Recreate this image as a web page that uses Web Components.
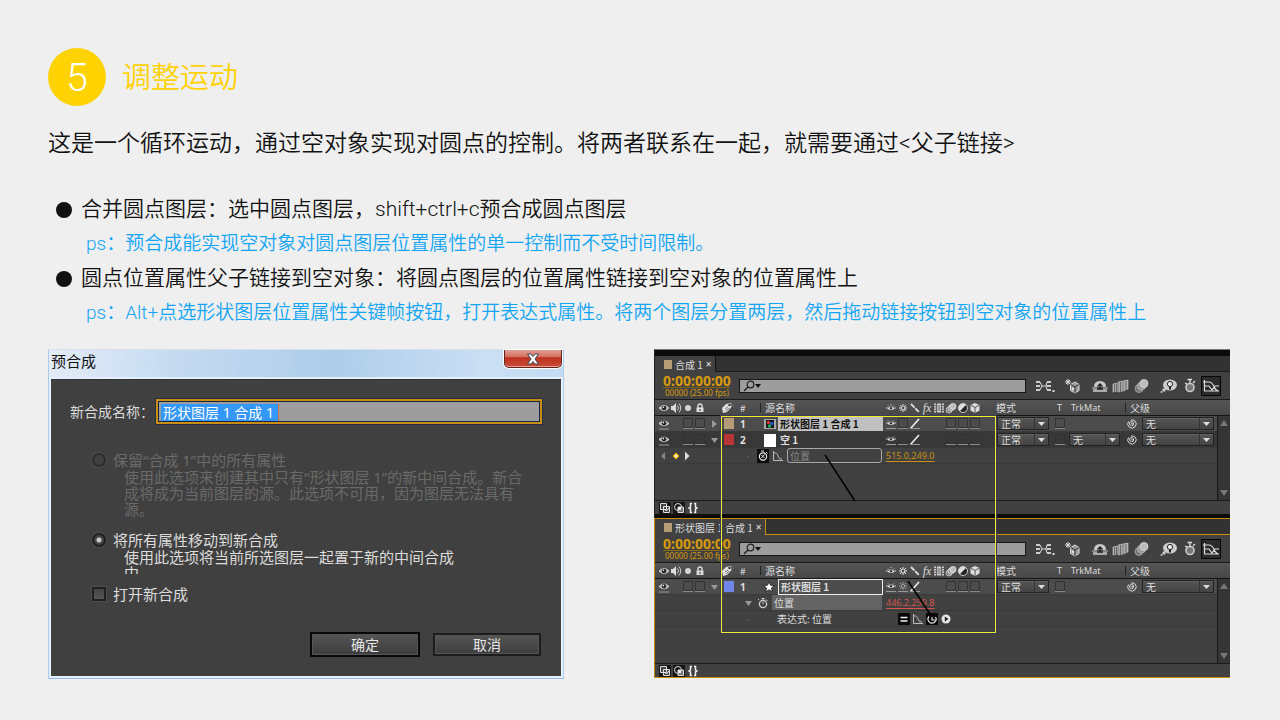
<!DOCTYPE html>
<html lang="zh-CN">
<head>
<meta charset="utf-8">
<title>调整运动</title>
<style>
body { margin: 0; background: #efefef; font-family: Roboto, "Noto Sans CJK SC", sans-serif; }
</style>
</head>
<body>
<tutorial-slide>
  <step-heading slot="heading" number="5">调整运动</step-heading>
  <span slot="lead">这是一个循环运动，通过空对象实现对圆点的控制。将两者联系在一起，就需要通过&lt;父子链接&gt;</span>
  <note-item slot="notes">合并圆点图层：选中圆点图层，shift+ctrl+c预合成圆点图层
    <span slot="ps">ps：预合成能实现空对象对圆点图层位置属性的单一控制而不受时间限制。</span>
  </note-item>
  <note-item slot="notes">圆点位置属性父子链接到空对象：将圆点图层的位置属性链接到空对象的位置属性上
    <span slot="ps">ps：Alt+点选形状图层位置属性关键帧按钮，打开表达式属性。将两个图层分置两层，然后拖动链接按钮到空对象的位置属性上</span>
  </note-item>
  <precomp-dialog slot="figures">预合成</precomp-dialog>
  <timeline-stack slot="figures">
    <timeline-panel comp="main">合成 1</timeline-panel>
    <timeline-panel comp="shape" active>形状图层 1 合成 1</timeline-panel>
  </timeline-stack>
</tutorial-slide>

<script>
/* name: [width, height, markup] */
const ICONS = {
  eye: [12, 12, '<path d="M1 6Q6 1 11 6Q6 11 1 6Z" fill="#bbb" stroke="#ddd" stroke-width=".8"/><circle cx="6" cy="6" r="2.3" fill="#222"/><circle cx="5.4" cy="5.2" r=".8" fill="#fff"/>'],
  eyeline: [12, 12, '<path d="M1 5.5Q6 .5 11 5.5Q6 10 1 5.5Z" fill="#bbb" stroke="#ddd" stroke-width=".8"/><circle cx="6" cy="5.2" r="2.2" fill="#222"/><circle cx="5.4" cy="4.6" r=".8" fill="#fff"/><path d="M1 11h10" stroke="#999"/>'],
  audio: [12, 12, '<path d="M1 4h2l3-3v10L3 8H1Z" fill="#ddd"/><path d="M7.500 3.500q2 2.500 0 5M9 1.500q3.500 4.500 0 9" fill="none" stroke="#ccc"/>'],
  solo: [12, 12, '<circle cx="6" cy="6" r="3" fill="#d4d4d4"/>'],
  lock: [12, 12, '<path d="M4 6V4a2 2 0 0 1 4 0v2" fill="none" stroke="#ddd" stroke-width="1.400"/><path d="M2.500 5.500h7V10h-7Z" fill="#ddd"/><path d="M6 7v2" stroke="#333"/>'],
  tag: [13, 12, '<path d="M1 6 5 2l5-1 .5 4L6 10l-4 1Z" fill="#ddd"/><circle cx="8.500" cy="3" r="1.200" fill="#333"/><path d="M9 3q3-3 3.500 1M4 7l3-2M5 9l3-3" stroke="#666" fill="none" stroke-width=".8"/>'],
  shy: [12, 12, '<path d="M1 6h2M9 6h2M3 3.500l1 1M9 3.500l-1 1M6 2v1" stroke="#ccc"/><path d="M3 6Q6 3 9 6V7Q6 9 3 7Z" fill="#eee"/><circle cx="6" cy="6.200" r="1.300" fill="#333"/>'],
  shyline: [12, 12, '<path d="M1 5h2M9 5h2M3 2.500l1 1M9 2.500l-1 1" stroke="#ccc"/><path d="M3 5Q6 2 9 5V6Q6 8 3 6Z" fill="#eee"/><circle cx="6" cy="5.200" r="1.300" fill="#333"/><path d="M1 10.500h10" stroke="#999"/>'],
  sun: [12, 12, '<circle cx="6" cy="6" r="2" fill="none" stroke="#ddd" stroke-width="1.200"/><path d="M6 2v1.500M6 8.500V10M2 6h1.500M8.500 6H10M3 3l1 1M8 8l1 1M9 3 8 4M4 8 3 9" stroke="#ddd"/>'],
  sunline: [12, 12, '<circle cx="6" cy="5" r="1.800" fill="none" stroke="#aaa"/><path d="M6 1v1.500M6 7.500V9M2 5h1.500M8.500 5H10M3 2l1 1M8 7l1 1M9 2 8 3M4 7 3 8" stroke="#aaa"/><path d="M1 10.500h10" stroke="#999"/>'],
  backslash: [12, 12, '<path d="M2 2l8 8" stroke="#ddd" stroke-width="1.800" stroke-dasharray="5 1"/>'],
  slash: [12, 12, '<path d="M1.500 10.500 10 1" stroke="#eee" stroke-width="1.600"/><path d="M1 10.500h10" stroke="#999"/>'],
  film: [12, 12, '<path d="M1 1.500h10v9H1Z" fill="#ccc"/><path d="M3.500 1v10M8.500 1v10M1 3.500h2M1 6h2M1 8.500h2M9 3.500h2M9 6h2M9 8.500h2" stroke="#444" stroke-width=".8"/><path d="M4.500 4h3M4.500 6h3M4.500 8h3" stroke="#666"/>'],
  blur: [12, 12, '<circle cx="4" cy="8" r="3" fill="#888" stroke="#ccc" stroke-width=".8"/><circle cx="6" cy="6" r="3" fill="#999" stroke="#ddd" stroke-width=".8"/><circle cx="8" cy="4.500" r="3" fill="#bbb" stroke="#eee" stroke-width=".8"/>'],
  adjust: [12, 12, '<circle cx="6" cy="6" r="4.500" fill="#222" stroke="#ccc"/><path d="M9.200 2.800A4.500 4.500 0 0 0 2.800 9.200Z" fill="#ddd"/>'],
  cube: [12, 12, '<path d="M6 1l4.500 2v5.500L6 11 1.500 8.500V3Z" fill="#ddd"/><path d="M1.500 3 6 5.500 10.500 3M6 5.500V11" stroke="#555" fill="none"/>'],
  box: [12, 12, '<path d="M1.500 .5h9v9h-9Z" fill="none" stroke="#333"/><path d="M1 10.500h10" stroke="#8a8a8a"/>'],
  none: [12, 12, ''],
  right: [8, 12, '<path d="M2 2v8l5-4Z" fill="#999"/>'],
  down: [8, 12, '<path d="M1 4h7L4.500 9Z" fill="#999"/>'],
  prevkey: [12, 12, '<path d="M7 2v8L3 6Z" fill="#888"/>'],
  key: [12, 12, '<path d="M6 2l4 4-4 4-4-4Z" fill="#e8a812" stroke="#222" stroke-width=".6"/><path d="M6 4l2 2-2 2-2-2Z" fill="#fff6c8"/>'],
  nextkey: [12, 12, '<path d="M3 1.500v9l4.500-4.500Z" fill="#ddd"/>'],
  dot: [8, 12, '<circle cx="4" cy="7" r=".7" fill="#777"/>'],
  comp: [14, 12, '<path d="M1 1h12v10H1Z" fill="#aaa"/><path d="M3 2h8v8H3Z" fill="#181818"/><circle cx="5.500" cy="4.500" r="1.700" fill="#d33"/><circle cx="8.800" cy="5.500" r="1.700" fill="#25c"/><circle cx="6.500" cy="8" r="1.700" fill="#2a5"/>'],
  white: [14, 14, '<path d="M1 1h12v13H1Z" fill="#fff"/>'],
  star: [12, 12, '<path d="M6 .8l1.500 3.500 3.800.3-2.900 2.500.9 3.700L6 8.800l-3.300 2 .9-3.700L.7 4.600l3.800-.3Z" fill="#fff" stroke="#111" stroke-width=".7"/>'],
  watch: [12, 12, '<circle cx="6" cy="7" r="3.600" fill="none" stroke="#ccc" stroke-width="1.300"/><path d="M6 7V4.500M4.500 1.500h3M6 1v2M9 2.500l1.500 1.500M2 3l-1-1" stroke="#ccc"/>'],
  watchon: [12, 14, '<path d="M0 0h12v14H0Z" fill="#0c0c0c"/><circle cx="6" cy="7.500" r="3.600" fill="none" stroke="#eee" stroke-width="1.200"/><path d="M4.500 6l3 3M4 2h3M9 3l1.500 1.500M7.500 5.500 4.500 9" stroke="#eee"/>'],
  graph: [12, 12, '<path d="M1.500 1v9.500H11M1.500 3Q5 2 6 6t4 3" fill="none" stroke="#bbb"/>'],
  equal: [12, 12, '<path d="M0 0h12v12H0Z" fill="#080808"/><path d="M2.500 4.500h7M2.500 8h7" stroke="#eee" stroke-width="1.600"/>'],
  whip: [12, 12, '<path d="M0 0h12v12H0Z" fill="#080808"/><path d="M3 3.500A4 4 0 1 0 9.500 4M6 3.500V7h3" fill="none" stroke="#eee" stroke-width="1.200"/>'],
  play: [12, 12, '<circle cx="6" cy="6" r="4.500" fill="#e4e4e4"/><path d="M4.800 3.500v5L8.500 6Z" fill="#222"/>'],
  spiral: [12, 12, '<path d="M5 7.500A2 2 0 1 1 7.500 6Q7.500 8 5.500 7.500M2.500 3.500A4.200 4.200 0 1 0 9 3Q7 1.500 5 2" fill="none" stroke="#ddd" stroke-width="1"/><circle cx="6" cy="5.800" r=".8" fill="#ddd"/>'],
  flow: [20, 14, '<path d="M1 3h4M1 7h4M1 11h4M12 3h4M12 7h4M12 11h4" stroke="#ccc" stroke-width="2"/><path d="M5 3l2 4-2 4M7 7h4M12 3l-1 4 1 4" fill="none" stroke="#ddd"/><path d="M17.500 11h2v2h-2Z" fill="#ddd"/>'],
  draft: [20, 16, '<path d="M5 1v6M2 4h6M3 2l4 4M7 2 3 6" stroke="#ddd"/><path d="M7.500 6.500l4.500-2.500 4 2.500v6l-4 2.500-4.500-2.500Z" fill="#999" stroke="#ddd"/><path d="M7.500 6.500l4.500 2.500 4-2.500M12 9v6" stroke="#333" fill="none"/><path d="M9 9.500l2 1v2l-2-1Z" fill="#eee"/>'],
  hide: [20, 14, '<path d="M4 8q0-6 6-6t6 6Z" fill="#c8c8c8"/><path d="M3 10h4v1h6v-1h4v3H3Z" fill="#aaa"/><path d="M2 9h5M13 9h5" stroke="#ccc"/><path d="M10 10V5M7.500 7.500 10 5l2.500 2.500" stroke="#222" fill="none" stroke-width="1.400"/>'],
  blend: [20, 14, '<path d="M2 5l5-1v8l-5 1ZM7 3l5-1v10l-5 1ZM12 2l5-1v9l-5 2Z" fill="#aaa" stroke="#ccc" stroke-width=".6"/><path d="M3.500 5v8M5.500 5v8M7 3v10M12 2v10M9.500 3v10M15 2v9" stroke="#555" stroke-width=".8"/>'],
  motion: [20, 16, '<circle cx="7" cy="10.500" r="4" fill="#777" stroke="#aaa" stroke-width=".8"/><circle cx="9.500" cy="8" r="4" fill="#999" stroke="#bbb" stroke-width=".8"/><circle cx="12" cy="5.500" r="4" fill="#bbb" stroke="#ddd" stroke-width=".8"/>'],
  brain: [20, 16, '<ellipse cx="11" cy="7" rx="7" ry="5.500" fill="#ccc"/><circle cx="5" cy="12" r="1.700" fill="#ccc"/><circle cx="2.500" cy="14" r="1" fill="#ccc"/><circle cx="11" cy="6" r="2.600" fill="#eee" stroke="#222"/><path d="M11 8.500v3" stroke="#222" stroke-width="2"/>'],
  timer: [20, 16, '<circle cx="10" cy="9.500" r="4" fill="#777" stroke="#ccc" stroke-width="1.600"/><path d="M10 5V2M7.500 1.500H12M13 5l2-2M5 5l2 1" stroke="#ddd" stroke-width="1.300"/>'],
  grapheditor: [20, 20, '<path d="M.5.500h19v19H.5Z" fill="#2b2b2b" stroke="#050505"/><path d="M3.500 4v11H18M2 6h6q3 0 5 4.500t5 4.500M4 10h4l3 4 3-4h4" fill="none" stroke="#ddd" stroke-width="1.200"/>'],
  layersfoot: [12, 12, '<path d="M0 0h12v12H0Z" fill="#151515"/><path d="M1.500 1.500h6v6h-6ZM4.500 4.500h6v6h-6Z" fill="#444" stroke="#ddd"/><path d="M5.500 7l2 2 2.500-3" stroke="#eee" fill="none"/>'],
  modefoot: [12, 12, '<path d="M0 0h12v12H0Z" fill="#151515"/><circle cx="5" cy="5" r="3.500" fill="none" stroke="#ddd"/><path d="M5 5h5.500v5.500H5Z" fill="#777" stroke="#ddd"/><path d="M5 5h3v3H5Z" fill="#eee"/>'],
  braces: [12, 12, '<path d="M5 1.500H3.500V5L2 6l1.500 1v3.500H5M7 1.500h1.500V5L10 6 8.500 7v3.500H7" fill="none" stroke="#eee" stroke-width="1.500"/>'],
  search: [20, 12, '<circle cx="7.500" cy="4.500" r="3.300" fill="none" stroke="#222" stroke-width="1.200"/><path d="M5 7l-4 4" stroke="#222" stroke-width="1.500"/><path d="M12 4h6l-3 4Z" fill="#111"/>'],
  cross: [14, 12, '<path d="M1.500 1h3.500l2 2.500L9 1h3.500L9 6l3.500 5H9L7 8.500 5 11H1.500L5 6Z" fill="#fff" stroke="#3b4455"/>'],
  scrollup: [8, 8, '<path d="M4 1l4 6H0Z" fill="#777"/>'],
  scrolldown: [8, 8, '<path d="M4 7l4-6H0Z" fill="#777"/>']
};

customElements.define('ae-icon', class extends HTMLElement {
  connectedCallback() {
    if (this.shadowRoot) return;
    const [w, h, art] = ICONS[this.getAttribute('name')];
    this.attachShadow({ mode: 'open' }).innerHTML =
      `<style>:host{display:inline-block;flex:none;line-height:0}svg{display:block}</style>
       <svg width="${w}" height="${h}" viewBox="0 0 ${w} ${h}" aria-hidden="true">${art}</svg>`;
  }
});

const icon = n => `<ae-icon name="${n}"></ae-icon>`;
const icons = s => s.split(' ').map(icon).join('');

function define(name, html) {
  customElements.define(name, class extends HTMLElement {
    connectedCallback() {
      if (this.shadowRoot) return;
      const root = this.attachShadow({ mode: 'open' });
      root.innerHTML = typeof html === 'function' ? html(this) : html;
    }
  });
}

define('tutorial-slide', `
<style>
:host { display: block; padding: 48px 50px 40px 48px; color: #111; font-weight: 350; }
p { margin: 21px 0 31px; font-size: 23px; line-height: 34px; }
.figures { display: grid; grid-template-columns: 516fr 576fr; column-gap: 90px; align-items: start; margin-top: 19px; }
</style>
<slot name="heading"></slot>
<p><slot name="lead"></slot></p>
<div role="list"><slot name="notes"></slot></div>
<div class="figures"><slot name="figures"></slot></div>`);

define('step-heading', el => `
<style>
:host { display: flex; align-items: center; gap: 16px; color: #ffd200; }
.n { width: 58px; height: 58px; border-radius: 50%; background: #ffd200; color: #fff; text-align: center; font: 300 39px/60px Roboto, sans-serif; }
h1 { margin: 0; font-size: 29px; line-height: 60px; height: 58px; font-weight: 350; }
</style>
<span class="n">${el.getAttribute('number')}</span><h1><slot></slot></h1>`);

define('note-item', `
<style>
:host { display: block; font-size: 21px; line-height: 35px; }
.main { display: flex; align-items: center; gap: 9px; padding-left: 8px; }
.main::before { content: ""; width: 16px; height: 16px; border-radius: 50%; background: #111; }
.ps { padding-left: 38px; font-size: 19px; line-height: 34px; color: #12a5f5; }
</style>
<div role="listitem"><div class="main"><span><slot></slot></span></div><div class="ps"><slot name="ps"></slot></div></div>`);

define('precomp-dialog', `
<style>
:host { display: block; box-sizing: border-box; padding: 0 2px 2px; border: 1px solid #a9cdee; border-top-color: #d9dfe8; border-bottom-color: #8dbdf0; background: #e6f2fc; font: 400 15px "Noto Sans", "Noto Sans CJK SC", sans-serif; color: #dcdcdc; }
header { display: flex; justify-content: space-between; margin: 0 -2px; padding-left: 2px; height: 27px; border-bottom: 2px solid #e3f0fc; background: linear-gradient(100deg, #e4ecf8, #c5daf0 25%, #aecdea 55%, #cbdff4 85%, #c2dbf3); color: #111; }
h2 { margin: 0; font-size: 15px; line-height: 23px; font-weight: 400; }
.close { width: 58px; height: 18px; margin-right: 1px; padding: 0; display: grid; place-items: center; border: 1px solid #65221d; border-top: 0; border-radius: 0 0 5px 5px; background: linear-gradient(#e0a095, #d4705f 40%, #bd3320 45%, #c84a36); box-shadow: inset 0 -1px #e9a295, 0 0 0 1px #fff; }
form { background: #404040; padding: 18px 19px 19px; border-top: 1px solid #333; margin: 0; }
.name { display: flex; align-items: center; height: 26px; gap: 2px; }
.name span { width: 84px; white-space: nowrap; font-size: 14px; }
.field { flex: 1; display: flex; box-sizing: border-box; height: 25px; padding: 3px 1px 1px 3px; border: 2px solid #c88e10; background: #9d9d9d; box-shadow: inset 0 0 0 1px #172347, 0 0 0 1px #2a3044; }
input[type=text] { width: 100%; min-width: 0; height: 17px; box-sizing: border-box; border: 0; outline: 0; padding: 0 0 0 2px; background: linear-gradient(90deg, #3397fc 117px, #d0733c 117px 118px, transparent 118px); color: #fff; font: 400 14px/17px "Noto Sans", "Noto Sans CJK SC", sans-serif; }
.opt { display: grid; grid-template-columns: 15px 1fr; column-gap: 6px; align-items: center; padding-left: 22px; line-height: 18px; }
.opt small { grid-column: 2; margin-left: 11px; font-size: 15px; line-height: 16px; white-space: nowrap; }
.opt input { appearance: none; margin: 0; width: 14px; height: 14px; box-sizing: border-box; border: 2px solid #202020; border-radius: 50%; background: #484848; box-shadow: 0 0 0 1px #4d4d4d; }
.opt input:checked { background: radial-gradient(#ccc 2px, #444 3px); }
.opt input:disabled { border-color: #2c2c2c; background: #404040; }
.opt input[type=checkbox] { border-radius: 0; background: linear-gradient(#444, #565656); }
.first { margin-top: 27px; color: #6a6a6a; }
.second { margin-top: 14px; }
.second small { height: 25px; overflow: hidden; }
.third { margin-top: 11px; }
.buttons { display: flex; justify-content: flex-end; align-items: center; gap: 13px; margin: 29px 1px 0 0; }
.buttons button { width: 108px; height: 23px; padding: 0; border: 2px solid #1c1c1c; background: linear-gradient(#555, #3c3c3c); color: #e6e6e6; font: 400 14px/18px "Noto Sans", "Noto Sans CJK SC", sans-serif; box-shadow: inset 0 0 0 1px #555; }
.buttons .ok { width: 110px; height: 25px; border-color: #080808; }
</style>
<header><h2><slot></slot></h2><button class="close" aria-label="关闭">${icon('cross')}</button></header>
<form>
  <label class="name"><span>新合成名称：</span><div class="field"><input type="text" value="形状图层 1 合成 1"></div></label>
  <div class="opt first"><input type="radio" id="keep" name="mode" disabled><label for="keep">保留“合成 1”中的所有属性</label>
    <small>使用此选项来创建其中只有“形状图层 1”的新中间合成。新合<br>成将成为当前图层的源。此选项不可用，因为图层无法具有<br>源。</small></div>
  <div class="opt second"><input type="radio" id="move" name="mode" checked><label for="move">将所有属性移动到新合成</label>
    <small>使用此选项将当前所选图层一起置于新的中间合成<br>中。</small></div>
  <div class="opt third"><input type="checkbox" id="open"><label for="open">打开新合成</label></div>
  <div class="buttons"><button type="button" class="ok">确定</button><button type="button">取消</button></div>
</form>`);

define('mini-select', el => `
<style>
:host { display: flex; height: 13px; box-sizing: border-box; border: 1px solid #222; background: linear-gradient(#555, #444); box-shadow: inset 0 1px #626262; }
select { appearance: none; flex: 1; min-width: 0; width: 100%; height: 11px; border: 0; margin: 0; padding: 0 0 0 3px; background: none; color: #ddd; font: 400 10px/11px "Noto Sans CJK SC", sans-serif; }
svg { flex: none; border-left: 1px solid #333; }
</style>
<select aria-label="${el.getAttribute('label')}"><option>${el.getAttribute('value')}</option></select>
<svg width="13" height="11" aria-hidden="true"><path d="M3 4h7L6.500 8Z" fill="#ddd"/></svg>`);

define('timeline-stack', `
<style>
:host { display: block; position: relative; border-left: 1px solid #222; border-top: 1px solid #777; background: #0b0b0b; padding-top: 6px; font-family: "Noto Sans CJK SC", sans-serif; font-size: 10px; font-weight: 400; color: #ddd; }
.range { position: absolute; left: 66px; right: 234px; top: 66px; height: 215px; border: 1px solid #f0ec2c; box-shadow: 0 0 0 1px #3a3c5c; pointer-events: none; }
.from { position: absolute; left: 102px; top: 37px; }
.to { position: absolute; right: 62px; top: 163px; }
</style>
<slot></slot>
<div class="range">
  <svg class="from" width="32" height="48"><path d="M1 1l30 46" stroke="#000" stroke-width="1.500"/></svg>
  <svg class="to" width="26" height="38"><path d="M1 1l24 36" stroke="#000" stroke-width="1.500"/></svg>
</div>`);

const sel = (label, value) => `<mini-select label="${label}" value="${value}"></mini-select>`;
const parent = `<div class="parent">${icon('spiral')}${sel('父级', '无')}</div>`;
const av = dir => `<div class="av">${icons('eyeline none box box')}<i></i>${icon(dir)}</div>`;

const COMPS = {
  main: `
  <tr class="sel"><td>${av('right')}</td><td><b class="sw" style="background:#b59b76"></b></td><td class="num">1</td>
    <td><div class="name">${icon('comp')}<strong class="hot">形状图层 1 合成 1</strong></div></td>
    <td class="sws">${icons('shyline box slash none none box box box')}</td><td>${sel('模式', '正常')}</td><td>${icon('box')}</td><td></td><td>${parent}</td></tr>
  <tr class="dark"><td>${av('down')}</td><td><b class="sw" style="background:#b93434"></b></td><td class="num">2</td>
    <td><div class="name">${icon('white')}<strong>空 1</strong></div></td>
    <td class="sws">${icons('shyline box slash none none box box box')}</td><td>${sel('模式', '正常')}</td><td>${icon('box')}</td><td>${sel('轨道遮罩', '无')}</td><td>${parent}</td></tr>
  <tr><td><div class="av">${icons('prevkey key nextkey')}</div></td><td></td><td class="tw">${icon('dot')}</td>
    <td><div class="prop">${icons('watchon graph')}<span class="target">位置</span></div></td><td class="val">515.0,249.0</td><td></td><td></td><td></td><td></td></tr>`,
  shape: `
  <tr class="sel"><td>${av('down')}</td><td><b class="sw" style="background:#7286ea"></b></td><td class="num">1</td>
    <td><div class="name">${icon('star')}<strong class="edit">形状图层 1</strong></div></td>
    <td class="sws">${icons('shyline sunline slash none none box box box')}</td><td>${sel('模式', '正常')}</td><td>${icon('box')}</td><td></td><td>${parent}</td></tr>
  <tr><td></td><td></td><td class="tw">${icon('down')}</td>
    <td><div class="prop">${icon('watch')}<span class="picked">位置</span></div></td><td class="val red">446.2,259.8</td><td></td><td></td><td></td><td></td></tr>
  <tr><td></td><td></td><td class="tw">${icon('dot')}</td>
    <td><span class="expr">表达式: 位置</span></td><td><div class="tools">${icons('equal graph whip play')}</div></td><td></td><td></td><td></td><td></td></tr>`
};

define('timeline-panel', el => `
<style>
:host { display: block; background: #414141; border-bottom: 4px solid #0b0b0b; }
:host([active]) { border: 1px solid #c98c0c; border-right: 0; margin-left: -1px; }
.tabs { display: flex; height: 15px; background: #323232; border-bottom: 1px solid #1a1a1a; }
.tab { display: flex; align-items: center; gap: 3px; height: 16px; padding: 0 3px 0 9px; box-sizing: border-box; background: #414141; border-right: 1px solid #111; white-space: nowrap; }
:host([active]) .tabs, :host([active]) .tab { border-color: #c98c0c; }
.tab b { width: 8px; height: 9px; background: #b59b76; }
.tab button { border: 0; padding: 0; background: none; color: #eee; font: 400 10px/14px "Noto Sans", sans-serif; }
.bar { display: flex; align-items: center; height: 27px; padding: 0 9px 0 8px; }
.time { width: 76px; color: #d79a0c; font-family: "Noto Sans", sans-serif; }
.time b { display: block; width: 67px; font-size: 14px; line-height: 13px; border-bottom: 1px solid #8a6512; }
.time small { display: block; padding-left: 2px; font-size: 8px; line-height: 10px; white-space: nowrap; }
.search { flex: 1; display: flex; align-items: center; height: 14px; box-sizing: border-box; padding-left: 3px; border: 1px solid #161616; background: #9d9d9d; margin-right: 9px; }
.search input { flex: 1; min-width: 0; border: 0; padding: 0; height: 11px; background: none; outline: 0; appearance: none; }
.group { display: flex; align-items: center; gap: 1px; margin-right: 7px; }
.group.a { gap: 8px; }
.group:last-child { margin-right: 0; }
.body { display: flex; height: 101px; border-bottom: 1px solid #1a1a1a; }
.scroll { width: 13px; display: flex; flex-direction: column; }
.scroll::before { content: ""; height: 15px; background: linear-gradient(#555, #474747); border-top: 1px solid #1a1a1a; border-bottom: 1px solid #151515; }
.track { flex: 1; display: flex; flex-direction: column; justify-content: space-between; align-items: center; padding: 3px 0; background: #353535; border-left: 1px solid #191919; }
.main { flex: 1; min-width: 0; }
table { width: 100%; table-layout: fixed; border-collapse: separate; border-spacing: 0; line-height: 14px; }
th, td { padding: 0; height: 15px; font-weight: 400; text-align: left; vertical-align: middle; white-space: nowrap; border-bottom: 1px solid #393939; line-height: 0; }
th { background: linear-gradient(#555, #474747); border-top: 1px solid #1a1a1a; border-bottom: 1px solid #151515; line-height: 14px; }
.sel td { background: #4c4c4c; }
.dark td { background: #383838; }
.av { display: flex; align-items: center; padding-left: 3px; }
.av i { width: 4px; }
.hd { display: flex; align-items: center; height: 15px; }
.pad { padding-left: 3px; }
.latin { font: 9px "Noto Sans", sans-serif; }
.rule::before { content: ""; width: 1px; height: 9px; margin-right: 4px; background: #222; }
.sw { display: block; width: 10px; height: 11px; margin-left: 3px; }
.num { padding-left: 3px; font: 700 10px/14px "Noto Sans", sans-serif; }
.name { display: flex; align-items: center; justify-content: space-between; padding-left: 6px; height: 15px; }
.name strong { width: 104px; flex: 0 1 calc(100% - 15px); box-sizing: border-box; padding-left: 2px; line-height: 14px; font-weight: 700; }
.hot { background: #c0c0c0; color: #111; }
.edit { border: 1px solid #eee; line-height: 12px; }
.sws { padding-left: 2px; }
.fx { width: 12px; text-align: center; font: italic 400 12px/12px "Liberation Serif", serif; }
.tw { padding-left: 7px; }
.prop { display: flex; align-items: center; gap: 3px; height: 15px; }
.target, .picked { flex: 1; box-sizing: border-box; height: 15px; margin-right: 1px; padding-left: 2px; }
.target { border: 1px solid #aaa; border-radius: 3px; color: #888; line-height: 13px; }
.picked { background: #636363; line-height: 15px; }
.val { padding-left: 3px; color: #c98f12; font: 400 9px/14px "Noto Sans", sans-serif; text-decoration: underline; text-underline-offset: 2px; }
.red { color: #d9534f; }
.expr { padding-left: 20px; line-height: 14px; }
.tools { display: flex; gap: 2px; padding-left: 15px; }
.parent { display: flex; align-items: center; gap: 4px; padding: 0 3px 0 1px; }
.parent mini-select { flex: 1; }
td > mini-select { margin: 0 5px 0 1px; }
.foot { display: flex; align-items: center; gap: 2px; height: 13px; padding-left: 4px; }
</style>
<div class="tabs"><div class="tab"><b></b><slot></slot><button aria-label="关闭">×</button></div></div>
<div class="bar">
  <div class="time"><b>0:00:00:00</b><small>00000 (25.00 fps)</small></div>
  <label class="search">${icon('search')}<input type="search" aria-label="搜索"></label>
  <div class="group a">${icons('flow draft')}</div>
  <div class="group">${icons('hide blend motion')}</div>
  <div class="group">${icons('brain timer grapheditor')}</div>
</div>
<div class="body">
  <div class="main"><table>
    <colgroup><col style="width:66px"><col style="width:16px"><col style="width:20px"><col><col style="width:113px"><col style="width:58px"><col style="width:14px"><col style="width:57px"><col style="width:92px"></colgroup>
    <thead><tr>
      <th><div class="av">${icons('eye audio solo lock')}</div></th><th><div class="hd">${icon('tag')}</div></th><th><div class="hd pad">#</div></th>
      <th><div class="hd pad rule">源名称</div></th>
      <th><div class="hd sws">${icons('shy sun backslash')}<span class="fx">fx</span>${icons('film blur adjust cube')}</div></th>
      <th><div class="hd">模式</div></th><th><div class="hd pad latin">T</div></th>
      <th><div class="hd pad latin">TrkMat</div></th><th><div class="hd rule">父级</div></th>
    </tr></thead>
    <tbody>${COMPS[el.getAttribute('comp')]}</tbody>
  </table></div>
  <div class="scroll"><div class="track">${icons('scrollup scrolldown')}</div></div>
</div>
<div class="foot">${icons('layersfoot modefoot braces')}</div>`);
</script>
</body>
</html>
